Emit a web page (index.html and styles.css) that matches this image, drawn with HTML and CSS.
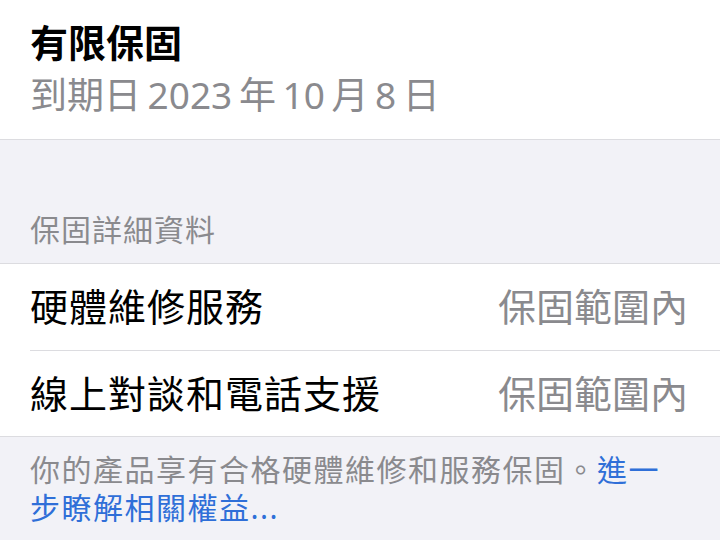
FILE: index.html
```html
<!DOCTYPE html>
<html lang="zh-Hant">
<head>
    <meta charset="UTF-8">
    <meta name="viewport" content="width=device-width, initial-scale=1.0">
    <title>有限保固</title>
    <link rel="stylesheet" href="styles.css">
</head>
<body>

    <!-- Coverage summary -->
    <div class="summary">
        <div class="summary-title">有限保固</div>
        <div class="summary-date">到期日 2023 年 10 月 8 日</div>
    </div>

    <!-- Coverage details list -->
    <div class="section-header">保固詳細資料</div>
    <div class="list">
        <div class="list-row">
            <span class="row-label">硬體維修服務</span>
            <span class="row-value">保固範圍內</span>
        </div>
        <div class="list-row">
            <span class="row-label">線上對談和電話支援</span>
            <span class="row-value">保固範圍內</span>
        </div>
    </div>

    <div class="section-footer">
        你的產品享有合格硬體維修和服務保固。<a href="#" class="more-link">進一步瞭解相關權益...</a>
    </div>

</body>
</html>
```

FILE: styles.css
```css
body {
    margin: 0;
    background-color: #f2f2f7;
    font-family: "Noto Sans", "Noto Sans CJK TC", sans-serif;
    color: #000;
}

.summary {
    background-color: #fff;
    padding: 18px 30px 20px;
    border-bottom: 1px solid #dcdce0;
}

.summary-title {
    font-size: 38px;
    line-height: 48px;
    font-weight: 700;
}

.summary-date {
    margin-top: 5px;
    font-size: 37px;
    line-height: 48px;
    color: #8a8a8e;
    word-spacing: -3px;
}

.section-header {
    padding: 73px 30px 16px;
    font-size: 30px;
    line-height: 34px;
    letter-spacing: 1px;
    color: #8a8a8e;
}

.list {
    background-color: #fff;
    border-top: 1px solid #dcdce0;
    border-bottom: 1px solid #dcdce0;
    padding-left: 30px;
}

.list-row {
    display: flex;
    justify-content: space-between;
    align-items: center;
    height: 86px;
    padding-right: 32px;
    padding-bottom: 5px;
    box-sizing: border-box;
    font-size: 38px;
    letter-spacing: 1px;
}

.list-row + .list-row {
    border-top: 1px solid #dcdce0;
}

.row-value {
    color: #8a8a8e;
    letter-spacing: 0;
}

.section-footer {
    padding: 14px 30px 0;
    font-size: 30px;
    line-height: 38px;
    letter-spacing: 1.5px;
    color: #8a8a8e;
}

.more-link {
    color: #2f6fd8;
    text-decoration: none;
}
```
